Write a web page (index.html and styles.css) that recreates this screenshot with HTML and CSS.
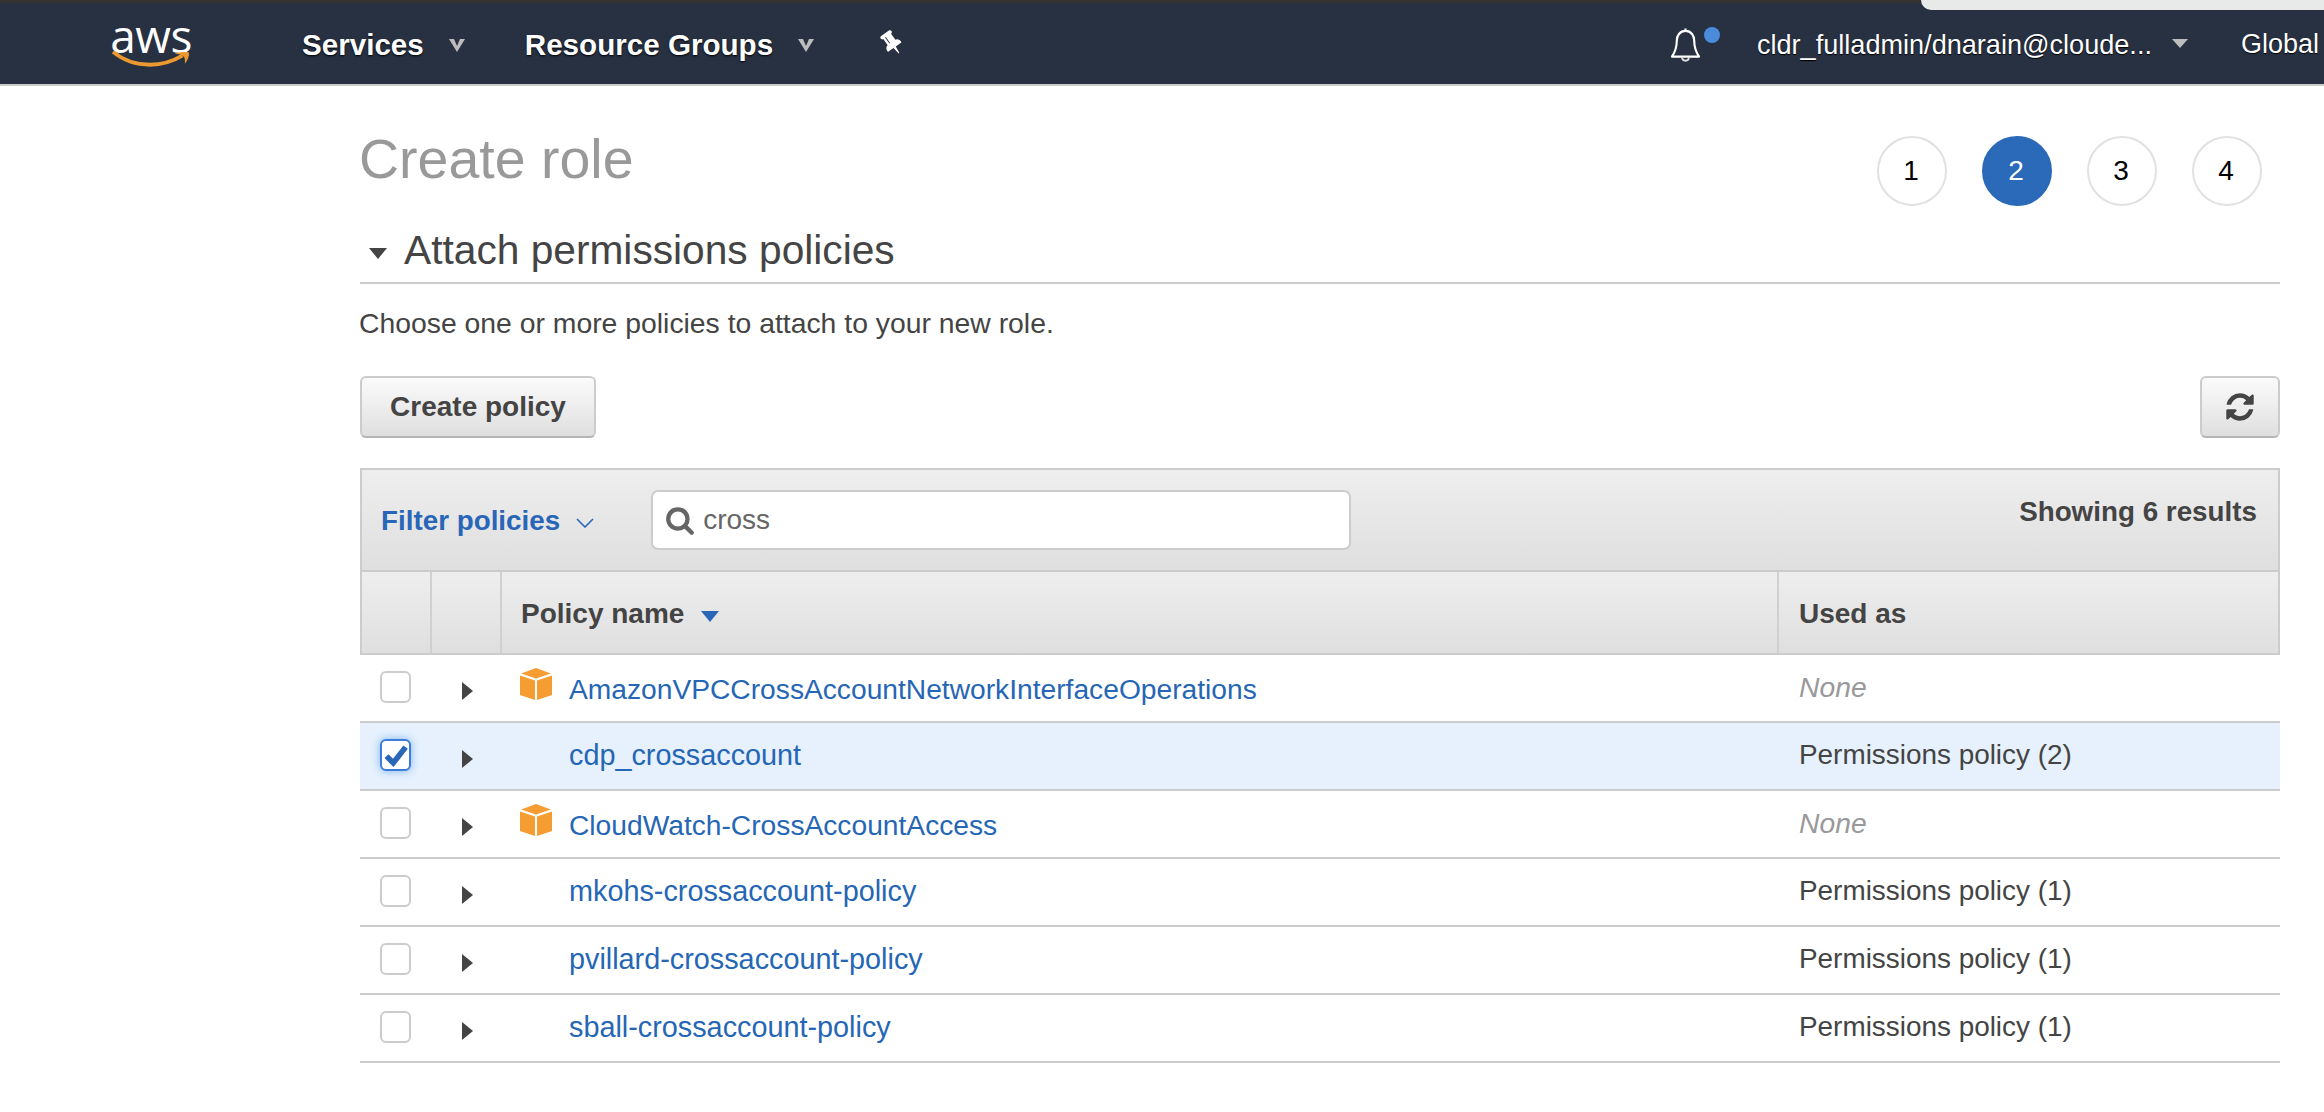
FILE: index.html
```html
<!DOCTYPE html>
<html lang="en">
<head>
    <meta charset="utf-8">
    <title>Create role</title>
    <link rel="stylesheet" href="styles.css">
</head>
<body>
    <div class="top-tab"></div>
    <header class="navbar">
        <a class="logo">
            <span class="logo-text">aws</span>
            <svg class="logo-smile" viewBox="0 0 82 20"><path d="M1 2C12 11 26 15.500 40 15.500C52 15.500 64 12 74 6" fill="none" stroke="#ec9a2f" stroke-width="4"/><path d="M66 3.500C71 2 77 1.500 81 2.500C81.500 6 79.500 11 76.500 14.500C77 10.500 77 8 75 6.500C73 5 70 4.500 66 3.500Z" fill="#ec9a2f"/></svg>
        </a>
        <span class="nav-item">Services</span>
        <svg class="nav-chevron" viewBox="0 0 18 14"><path d="M1 1H6L9 8L12 1H17L9 14Z" fill="#bdbdbd"/></svg>
        <span class="nav-item resource">Resource Groups</span>
        <svg class="nav-chevron" viewBox="0 0 18 14"><path d="M1 1H6L9 8L12 1H17L9 14Z" fill="#bdbdbd"/></svg>
        <svg class="pin" viewBox="0 0 1152 1792"><path fill="#fff" d="M480 867v-480q0-14-9-23t-23-9-23 9-9 23v448q0 14 9 23t23 9 23-9 9-23zm672 352q0 26-19 45t-45 19h-429l-51 483q-2 12-10.500 20.500t-20.500 8.500h-1q-27 0-32-27l-76-485h-404q-26 0-45-19t-19-45q0-123 78.500-221.500t177.500-98.500v-512q-52 0-90-38t-38-90 38-90 90-38h640q52 0 90 38t38 90-38 90-90 38v512q99 0 177.500 98.500t78.500 221.500z"/></svg>
        <div class="nav-right">
            <div class="bell-wrap">
                <svg class="bell" viewBox="0 0 32 36"><path d="M16 1.500V4M16 4C10 4 7 9 7 14C7 22 5 26 2 30.500H30C27 26 25 22 25 14C25 9 22 4 16 4Z" fill="none" stroke="#fff" stroke-width="2.200" stroke-linejoin="round"/><path d="M12.500 31C12.500 36 19.500 36 19.500 31" fill="none" stroke="#ddd" stroke-width="2"/></svg>
                <span class="bell-dot"></span>
            </div>
            <span class="user">cldr_fulladmin/dnarain@cloude...</span>
            <svg class="user-caret" viewBox="0 0 16 9"><path d="M0 0H16L8 9Z" fill="#bdbdbd"/></svg>
            <span class="region">Global</span>
        </div>
    </header>

    <main class="page">
        <div class="title-row">
            <h1>Create role</h1>
            <ol class="stepper">
                <li>1</li>
                <li class="current">2</li>
                <li>3</li>
                <li>4</li>
            </ol>
        </div>
        <h2 class="section"><span class="section-arrow"></span>Attach permissions policies</h2>
        <p class="intro">Choose one or more policies to attach to your new role.</p>

        <div class="actions">
            <button class="btn">Create policy</button>
            <button class="btn btn-icon">
                <svg viewBox="0 0 1792 1792"><path fill="#444" d="M1639 1056q0 5-1 7-64 268-268 434.500t-478 166.500q-146 0-282.500-55t-243.500-157l-129 129q-19 19-45 19t-45-19-19-45v-448q0-26 19-45t45-19h448q26 0 45 19t19 45-19 45l-137 137q71 66 161 102t187 36q134 0 250-65t186-179q11-17 53-117 8-23 30-23h192q13 0 22.500 9.500t9.500 22.500zm25-800v448q0 26-19 45t-45 19h-448q-26 0-45-19t-19-45 19-45l138-138q-148-137-349-137-134 0-250 65t-186 179q-11 17-53 117-8 23-30 23h-199q-13 0-22.500-9.500t-9.500-22.500v-7q65-268 270-434.500t480-166.500q146 0 284 55.500t245 156.500l130-129q19-19 45-19t45 19 19 45z"/></svg>
            </button>
        </div>

        <section class="policies">
            <div class="filter-bar">
                <span class="filter-label">Filter policies</span>
                <svg class="filter-chevron" viewBox="0 0 18 10"><path d="M1 1L9 9L17 1" fill="none" stroke="#2a66b8" stroke-width="1.600"/></svg>
                <div class="search">
                    <svg viewBox="0 0 1792 1792"><path fill="#666" d="M1216 832q0-185-131.500-316.500t-316.500-131.500-316.500 131.500-131.500 316.500 131.500 316.500 316.500 131.500 316.500-131.500 131.500-316.500zm512 832q0 52-38 90t-90 38q-54 0-90-38l-343-342q-179 124-399 124-143 0-273.500-55.500t-225-150-150-225-55.500-273.500 55.500-273.500 150-225 225-150 273.500-55.500 273.500 55.500 225 150 150 225 55.500 273.500q0 220-124 399l343 343q37 37 37 90z"/></svg>
                    <span>cross</span>
                </div>
                <span class="result-count">Showing 6 results</span>
            </div>
            <div class="row head">
                <div class="cell"></div>
                <div class="cell"></div>
                <div class="cell name-head">Policy name <span class="sort-arrow"></span></div>
                <div class="cell used-head">Used as</div>
            </div>

            <div class="row">
                <div class="cell"><span class="check"></span></div>
                <div class="cell"><span class="expand"></span></div>
                <div class="cell name aws"><svg class="cube" viewBox="0 0 32 32"><path fill="#f59c33" d="M16 0L31 5.500L16 10.500L1 5.500Z"/><path fill="#f59c33" d="M0 7.500L15 12.500V32L0 27Z"/><path fill="#f59c33" d="M32 7.500L17 12.500V32L32 27Z"/></svg><a>AmazonVPCCrossAccountNetworkInterfaceOperations</a></div>
                <div class="cell none">None</div>
            </div>
            <div class="row selected">
                <div class="cell"><span class="check checked"><svg viewBox="0 0 24 24"><path d="M4 13L10 19L21 5" fill="none" stroke="#2a66b8" stroke-width="5"/></svg></span></div>
                <div class="cell"><span class="expand"></span></div>
                <div class="cell name"><span class="slot"></span><a>cdp_crossaccount</a></div>
                <div class="cell">Permissions policy (2)</div>
            </div>
            <div class="row">
                <div class="cell"><span class="check"></span></div>
                <div class="cell"><span class="expand"></span></div>
                <div class="cell name aws"><svg class="cube" viewBox="0 0 32 32"><path fill="#f59c33" d="M16 0L31 5.500L16 10.500L1 5.500Z"/><path fill="#f59c33" d="M0 7.500L15 12.500V32L0 27Z"/><path fill="#f59c33" d="M32 7.500L17 12.500V32L32 27Z"/></svg><a>CloudWatch-CrossAccountAccess</a></div>
                <div class="cell none">None</div>
            </div>
            <div class="row">
                <div class="cell"><span class="check"></span></div>
                <div class="cell"><span class="expand"></span></div>
                <div class="cell name"><span class="slot"></span><a>mkohs-crossaccount-policy</a></div>
                <div class="cell">Permissions policy (1)</div>
            </div>
            <div class="row">
                <div class="cell"><span class="check"></span></div>
                <div class="cell"><span class="expand"></span></div>
                <div class="cell name"><span class="slot"></span><a>pvillard-crossaccount-policy</a></div>
                <div class="cell">Permissions policy (1)</div>
            </div>
            <div class="row">
                <div class="cell"><span class="check"></span></div>
                <div class="cell"><span class="expand"></span></div>
                <div class="cell name"><span class="slot"></span><a>sball-crossaccount-policy</a></div>
                <div class="cell">Permissions policy (1)</div>
            </div>
        </section>
    </main>
</body>
</html>
```

FILE: styles.css
```css
html,body{
    margin: 0;
    padding: 0;
    background: #fff;
    font-family: "Liberation Sans", Arial, sans-serif;
    font-size: 28px;
    color: #444;
    overflow: hidden;
}

/* light strip peeking in at the top right */
.top-tab{
    position: absolute;
    top: 0;
    right: 0;
    width: 403px;
    height: 10px;
    background: #e8e9e9;
    border-bottom-left-radius: 14px;
}

.navbar{
    display: flex;
    align-items: center;
    box-sizing: border-box;
    height: 86px;
    padding-left: 110px;
    background: #283142;
    border-top: 3px solid #333;
    border-bottom: 2px solid #ccc;
    color: #fff;
    white-space: nowrap;
}
.logo{
    display: flex;
    flex-direction: column;
    align-items: center;
    width: 82px;
    height: 49px;
    margin-top: 1px;
}
.logo-text{
    font-family: "Open Sans", sans-serif;
    font-size: 46px;
    line-height: 30px;
    height: 30px;
    letter-spacing: -.5px;
    color: #fff;
}
.logo-smile{
    display: block;
    width: 82px;
    height: 19px;
    margin-top: 0;
}
.nav-item{
    margin-left: 110px;
    margin-top: 3px;
    font-weight: 700;
    font-size: 29.600px;
    text-shadow: 0 1px 2px #000;
}
.nav-item.resource{
    margin-left: 59px;
}
.nav-chevron{
    width: 18px;
    height: 14px;
    margin-left: 24px;
    margin-top: 2px;
}
.pin{
    width: 17px;
    height: 27px;
    margin-left: 68px;
    margin-top: -2px;
    transform: rotate(-35deg);
}
.nav-right{
    display: flex;
    align-items: center;
    margin-left: auto;
}
.bell-wrap{
    display: flex;
    align-items: flex-start;
    margin-top: 2px;
    margin-right: 37px;
}
.bell{
    width: 31px;
    height: 35px;
}
.bell-dot{
    width: 16px;
    height: 16px;
    margin-left: 3px;
    border-radius: 50%;
    background: #4a8bdc;
}
.user, .region{
    margin-top: 2px;
    font-size: 27px;
    text-shadow: 0 1px 1px #000;
}
.user{
    font-size: 27.100px;
}
.user-caret{
    width: 16px;
    height: 9px;
    margin-left: 20px;
}
.region{
    margin-left: 53px;
    margin-right: 5px;
}

.page{
    width: 1920px;
    margin-left: 360px;
}
.title-row{
    display: flex;
    justify-content: space-between;
    height: 124px;
    padding-top: 50px;
}
h1{
    margin: -8px 0 0 -1px;
    font-size: 55.500px;
    font-weight: 400;
    line-height: 62px;
    color: #999;
}
.stepper{
    display: flex;
    gap: 35px;
    margin: 0;
    padding: 0 18px 0 0;
    list-style: none;
}
.stepper li{
    display: flex;
    align-items: center;
    justify-content: center;
    box-sizing: border-box;
    width: 70px;
    height: 70px;
    padding-right: 2px;
    border: 2px solid #e1e1e1;
    border-radius: 50%;
    font-size: 28px;
    color: #000;
}
.stepper li.current{
    background: #2a6ab8;
    border-color: #2a6ab8;
    color: #fff;
}

.section{
    display: flex;
    align-items: center;
    box-sizing: border-box;
    height: 74px;
    margin: 0;
    margin-top: -50px;
    padding: 9px 0 0 9px;
    border-bottom: 2px solid #ccc;
    font-size: 40.700px;
    font-weight: 400;
    color: #444;
}
.section-arrow{
    width: 0;
    height: 0;
    margin: 5px 17px 0 0;
    border-left: 9.500px solid transparent;
    border-right: 9.500px solid transparent;
    border-top: 11px solid #444;
}
.intro{
    margin: 22px 0 0 -1px;
    font-size: 28.350px;
    line-height: 34px;
    color: #444;
}
.actions{
    display: flex;
    justify-content: space-between;
    margin-top: 36px;
}
.btn{
    box-sizing: border-box;
    height: 62px;
    width: 236px;
    padding: 0 0 0 0;
    font-family: inherit;
    font-size: 28px;
    font-weight: 700;
    color: #444;
    background: linear-gradient(#fbfbfb, #dfdfdf);
    border: 2px solid #ccc;
    border-bottom-color: #b5b5b5;
    border-radius: 6px;
}
.btn-icon{
    display: flex;
    align-items: center;
    justify-content: center;
    width: 80px;
}
.btn-icon svg{
    width: 32px;
    height: 32px;
}

.policies{
    margin-top: 30px;
}
.filter-bar{
    display: flex;
    align-items: center;
    box-sizing: border-box;
    height: 104px;
    padding: 0 21px 0 19px;
    background: linear-gradient(#eee, #dfdfdf);
    border: 2px solid #ccc;
}
.filter-label{
    margin-top: 1px;
    font-size: 27.800px;
    font-weight: 700;
    color: #2a66b8;
    white-space: nowrap;
}
.filter-chevron{
    width: 18px;
    height: 10px;
    margin: 6px 0 0 16px;
}
.search{
    display: flex;
    align-items: center;
    gap: 8px;
    box-sizing: border-box;
    width: 700px;
    height: 60px;
    margin-top: -1px;
    margin-left: 57px;
    padding-left: 12px;
    background: #fff;
    border: 2px solid #ccc;
    border-radius: 7px;
    color: #666;
}
.search svg{
    width: 30px;
    height: 30px;
}
.result-count{
    margin-left: auto;
    margin-top: -16px;
    font-size: 27.800px;
    font-weight: 700;
    color: #444;
}

.row{
    display: grid;
    grid-template-columns: 70px 70px 1278px 1fr;
    box-sizing: border-box;
    height: 68px;
    border-bottom: 2px solid #ccc;
    font-size: 27.900px;
}
.row.selected{
    background: #e6f1fd;
}
.cell{
    display: flex;
    align-items: center;
    min-width: 0;
    padding-bottom: 2px;
    white-space: nowrap;
}
.cell:first-child{
    padding-left: 20px;
}
.cell:nth-child(2){
    padding-left: 32px;
}
.cell:last-child{
    padding-left: 21px;
}
.row.head{
    height: 85px;
    margin-top: -2px;
    background: linear-gradient(#eee, #dfdfdf);
    border: 2px solid #ccc;
    font-size: 28px;
    font-weight: 700;
    grid-template-columns: 70px 70px 1277px 1fr;
}
.row.head .cell{
    padding: 3px 0 0 19px;
}
.row.head .cell:last-child{
    padding-left: 20px;
}
.row.head .cell:nth-child(-n+3){
    border-right: 2px solid #d0d0d0;
}
.name-head{
    gap: 9px;
}
.sort-arrow{
    width: 0;
    height: 0;
    margin: 4px 0 0 8px;
    border-left: 9px solid transparent;
    border-right: 9px solid transparent;
    border-top: 11px solid #2a66b8;
}
.check{
    display: block;
    box-sizing: border-box;
    width: 31px;
    height: 32px;
    background: #fff;
    border: 2px solid #ccc;
    border-radius: 6px;
}
.check.checked{
    border-color: #3b7dd8;
    box-shadow: 0 0 8px #7fb2ee;
}
.check.checked svg{
    display: block;
    width: 27px;
    height: 28px;
}
.expand{
    width: 0;
    height: 0;
    margin-top: 8px;
    border-top: 9px solid transparent;
    border-bottom: 9px solid transparent;
    border-left: 11px solid #444;
}
.name{
    padding-left: 20px;
}
.cube, .slot{
    flex: none;
    display: block;
    width: 32px;
    height: 32px;
    margin-right: 17px;
}
.cube{
    margin-top: -7px;
}
.name a{
    font-size: 28.800px;
    color: #2566b5;
}
.name.aws a{
    margin-top: 4px;
    font-size: 28.200px;
}
.none{
    font-size: 28.300px;
    font-style: italic;
    color: #999;
}
```
